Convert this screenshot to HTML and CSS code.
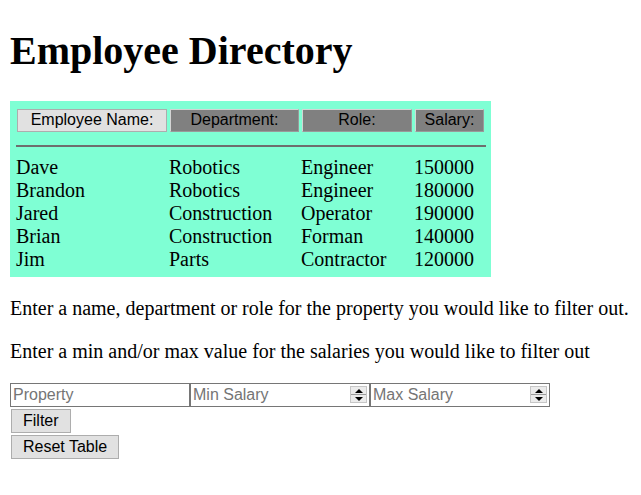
FILE: index.html
```html
<!DOCTYPE html>
<html lang="en">
<head>
<meta charset="utf-8">
<title>Employee Directory</title>
<link rel="stylesheet" href="styles.css">
</head>
<body>
<h1 class="title">Employee Directory</h1>
<div class="directory">
  <button class="sort active">Employee Name:</button>
  <button class="sort">Department:</button>
  <button class="sort">Role:</button>
  <button class="sort">Salary:</button>
  <hr class="rule">
  <div class="cell">Dave</div><div class="cell">Robotics</div><div class="cell">Engineer</div><div class="cell">150000</div>
  <div class="cell">Brandon</div><div class="cell">Robotics</div><div class="cell">Engineer</div><div class="cell">180000</div>
  <div class="cell">Jared</div><div class="cell">Construction</div><div class="cell">Operator</div><div class="cell">190000</div>
  <div class="cell">Brian</div><div class="cell">Construction</div><div class="cell">Forman</div><div class="cell">140000</div>
  <div class="cell">Jim</div><div class="cell">Parts</div><div class="cell">Contractor</div><div class="cell">120000</div>
</div>
<p class="note">Enter a name, department or role for the property you would like to filter out.</p>
<p class="note">Enter a min and/or max value for the salaries you would like to filter out</p>
<div class="filters">
  <div class="field"><input class="entry" type="text" placeholder="Property"></div>
  <div class="field"><input class="entry" type="number" placeholder="Min Salary"><span class="spin"><span class="step up"></span><span class="step down"></span></span></div>
  <div class="field"><input class="entry" type="number" placeholder="Max Salary"><span class="spin"><span class="step up"></span><span class="step down"></span></span></div>
</div>
<div class="actions">
  <button class="action">Filter</button>
  <button class="action">Reset Table</button>
</div>
</body>
</html>
```
FILE: styles.css
```css
body {
  margin: 10px;
  background: #ffffff;
  color: #000000;
  font-family: "Liberation Serif", "Times New Roman", serif;
  font-size: 20px;
}

.title {
  font-size: 40px;
  font-weight: bold;
  margin: 17px 0 26.8px;
  line-height: normal;
}

.directory {
  display: grid;
  grid-template-columns: 153px 132px 113px 72px;
  width: max-content;
  padding: 8px 5px 6px 6px;
  background: #7fffd4;
}

.sort {
  box-sizing: border-box;
  width: calc(100% - 3px);
  height: 23px;
  margin: 0 0 0 1px;
  padding: 0;
  font-family: "Liberation Sans", Arial, sans-serif;
  font-size: 16px;
  color: #000000;
  background: #808080;
  border: 1px solid;
  border-color: #d4d4d4 #9a9a9a #9a9a9a #d4d4d4;
}

.sort.active {
  background: #e1e1e1;
  border-color: #adadad;
}

.rule {
  grid-column: 1 / -1;
  margin: 13px 0 9px;
  height: 0;
  border: 0;
  border-top: 2px solid #6e6e6e;
}

.cell {
  line-height: 23px;
  white-space: nowrap;
}

.note {
  margin: 20px 0;
}

.filters {
  display: flex;
}

.field {
  box-sizing: border-box;
  width: 180px;
  height: 24px;
  border: 1px solid #767676;
  display: flex;
  align-items: center;
  background: #ffffff;
}

.entry {
  flex: 1;
  min-width: 0;
  border: 0;
  outline: none;
  padding: 0 2px;
  margin: 0;
  background: transparent;
  font-family: "Liberation Sans", Arial, sans-serif;
  font-size: 16px;
  color: #000000;
  -moz-appearance: textfield;
}

.entry::placeholder {
  color: #757575;
}

.entry::-webkit-inner-spin-button,
.entry::-webkit-outer-spin-button {
  -webkit-appearance: none;
  margin: 0;
}

.spin {
  box-sizing: border-box;
  width: 17px;
  height: 17px;
  margin-right: 2px;
  display: flex;
  flex-direction: column;
  border: 1px solid #c6c6c6;
  background: #ececec;
}

.step {
  flex: 1;
  display: flex;
  align-items: center;
  justify-content: center;
}

.step.up {
  border-bottom: 1px solid #9c9c9c;
}

.step.up::before {
  content: "";
  border-left: 4px solid transparent;
  border-right: 4px solid transparent;
  border-bottom: 4px solid #000000;
}

.step.down::before {
  content: "";
  border-left: 4px solid transparent;
  border-right: 4px solid transparent;
  border-top: 4px solid #000000;
}

.actions {
  display: flex;
  flex-direction: column;
  align-items: flex-start;
  gap: 2px;
  margin-top: 2px;
  padding-left: 1px;
}

.action {
  box-sizing: border-box;
  height: 24px;
  margin: 0;
  padding: 0 11px;
  font-family: "Liberation Sans", Arial, sans-serif;
  font-size: 16px;
  color: #000000;
  background: #e1e1e1;
  border: 1px solid #adadad;
}
```
